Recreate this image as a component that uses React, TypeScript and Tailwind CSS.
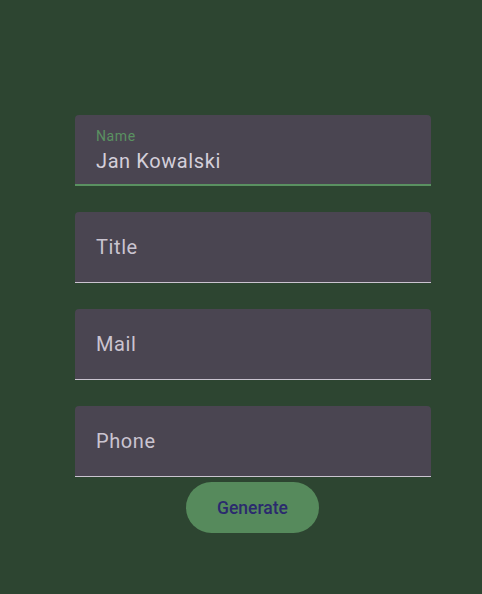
export default function App() {
  const fields = ['Title', 'Mail', 'Phone'];

  return (
    <div
      className="min-h-[594px] w-full bg-[#2d4531] pt-[115px]"
      style={{ fontFamily: 'Roboto, "Liberation Sans", sans-serif' }}
    >
      <div className="ml-[75px] flex w-[356px] flex-col">
        {/* Focused field */}
        <div className="flex h-[71px] w-full flex-col rounded-t bg-[#4a4551] border-b-2 border-[#5a9161] px-[21px] pt-[13px]">
          <span className="text-[14px] leading-[16px] tracking-[0.6px] text-[#5a9161]">Name</span>
          <span className="mt-[4px] text-[20px] leading-[26px] tracking-[0.6px] text-[#d4cfda]">Jan Kowalski</span>
        </div>

        {fields.map((f) => (
          <div
            key={f}
            className="mt-[26px] flex h-[71px] w-full items-center rounded-t bg-[#4a4551] border-b border-[#cac4d0] px-[21px]"
          >
            <span className="text-[20px] leading-[26px] tracking-[0.6px] text-[#cac4d0]">{f}</span>
          </div>
        ))}

        <button className="ml-[111px] mt-[5px] flex h-[51px] w-[133px] items-center justify-center rounded-full bg-[#568a5c] pt-[2px] text-[17.5px] font-medium text-[#2b2a6e]">
          Generate
        </button>
      </div>
    </div>
  );
}
